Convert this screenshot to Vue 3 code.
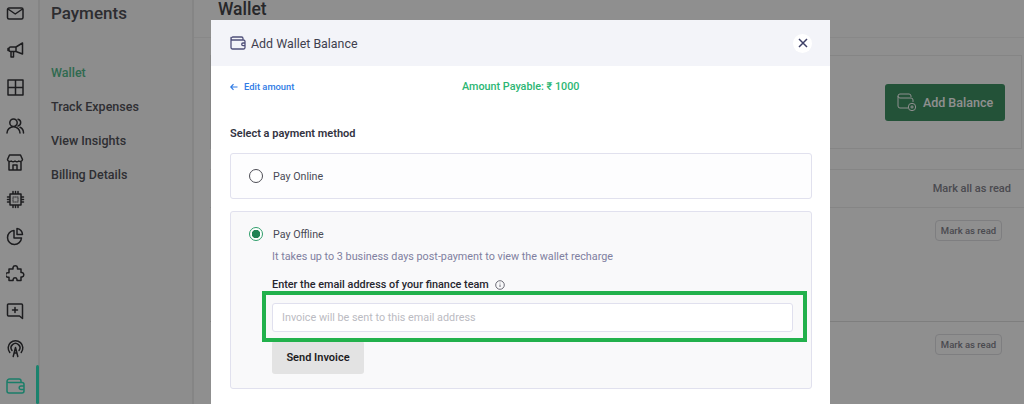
<script setup>
const icons = [
  { d: 'M3 4h12.500a1.500 1.500 0 0 1 1.500 1.500v8a1.500 1.500 0 0 1-1.500 1.500H3a1.500 1.500 0 0 1-1.500-1.500v-8A1.500 1.500 0 0 1 3 4zM2 5l7.250 5L16.500 5' },
  { d: 'M16.500 2v11L10 10.500H4.500A1.500 1.500 0 0 1 3 9V7.500A1.500 1.500 0 0 1 4.500 6H10zM10 6v4.500M5 10.500v5.500h2.500v-5.500M3 7.500H2v2h1' },
  { d: 'M2 2h15v15H2zM9.500 2v15M2 9.500h15' },
  { d: 'M7.500 3a3.700 3.700 0 1 1 0 7.400 3.700 3.700 0 0 1 0-7.400zM1 17c0-3.500 2.800-6.200 6.500-6.200S14 13.500 14 17M12 3.200a3.500 3.500 0 0 1 0 6.800M14 11.200c2 .8 3.500 3 3.500 5.800' },
  { d: 'M3.500 2h11L16.500 6.500a2.300 2.300 0 0 1-3.700 1.500 3 3 0 0 1-3.800 0 3 3 0 0 1-3.800 0A2.300 2.300 0 0 1 1.500 6.500zM3 9v8h12V9M7 17v-5h4v5' },
  { d: 'M4 4h11v11H4zM7 1.500V4M9.500 1.500V4M12 1.500V4M7 15v2.500M9.500 15v2.500M12 15v2.500M1.500 7H4M1.500 9.500H4M1.500 12H4M15 7h2.500M15 9.500h2.500M15 12h2.500' },
  { d: 'M8 3.500a7 7 0 1 0 7.500 7.500H8zM11 1.500a6 6 0 0 1 5.500 6H11z' },
  { d: 'M7 3.500a2.300 2.300 0 0 1 4.500 0V5h3.500v3.500h1a2.300 2.300 0 0 1 0 4.500h-1v3.500h-4v-1.200a2 2 0 0 0-3.900 0v1.200H3v-3.300H1.800a2.200 2.200 0 0 1 0-4.400H3V5h4z' },
  { d: 'M2.500 2h13a1 1 0 0 1 1 1v13.500L13.500 14h-11a1 1 0 0 1-1-1V3a1 1 0 0 1 1-1zM9 5.500v5M6.500 8h5' },
  { d: 'M3.800 13.500a7.300 7.300 0 1 1 11.400 0M6 11.500a4.400 4.400 0 1 1 7 0M7.200 17.500l2.300-9 2.300 9M8 14h3' },
];
</script>

<template>
  <div class="page">
    <nav class="rail">
      <svg v-for="(ic, i) in icons" :key="i" class="rail-icon" viewBox="0 0 19 19" width="19" height="19">
        <path :d="ic.d" />
        <path v-if="i === 5" class="chip-dots" d="M7 7h5v5H7z" />
      </svg>
      <svg class="rail-icon active-icon" viewBox="0 0 19 19" width="19" height="19">
        <path d="M1 5.500A2.500 2.500 0 0 1 3.500 3h9.500a2 2 0 0 1 2 2v1.500M1 5.500V15a2 2 0 0 0 2 2h13a2 2 0 0 0 2-2V8.500a2 2 0 0 0-2-2H3a2 2 0 0 1-2-1zM18 10h-3a1.800 1.800 0 0 0 0 3.600h3" />
      </svg>
      <span class="active-bar"></span>
    </nav>

    <aside class="side">
      <h2>Payments</h2>
      <ul>
        <li class="on">Wallet</li>
        <li>Track Expenses</li>
        <li>View Insights</li>
        <li>Billing Details</li>
      </ul>
    </aside>

    <main class="main">
      <header class="main-head"><h1>Wallet</h1></header>
      <div class="content">
        <section class="balance">
          <button class="add">
            <svg viewBox="0 0 20 20" width="20" height="20" class="add-icon">
              <path d="M1 4a2 2 0 0 1 2-2h9a2 2 0 0 1 2 2v1M1 4v10a2 2 0 0 0 2 2h8M1 4a2 2 0 0 0 2 2h11a2 2 0 0 1 2 2v2" />
              <circle cx="15" cy="15" r="3.700" /><path d="M15 13.300v3.400M13.300 15h3.400" />
            </svg>
            Add Balance
          </button>
        </section>
        <div class="mark-all">Mark all as read</div>
        <div class="note"><span class="mark">Mark as read</span></div>
        <div class="note"><span class="mark">Mark as read</span></div>
      </div>
    </main>

    <div class="scrim"></div>

    <div class="modal">
      <header class="m-head">
        <svg viewBox="0 0 16 16" width="16" height="16" class="m-wallet">
          <path d="M1 4a2 2 0 0 1 2-2h8.500a1.500 1.500 0 0 1 1.500 1.500V5M1 4v8.500A1.500 1.500 0 0 0 2.500 14h11a1.500 1.500 0 0 0 1.500-1.500v-6A1.500 1.500 0 0 0 13.500 5H3A2 2 0 0 1 1 4zM15 8h-2a1.300 1.300 0 0 0 0 2.600h2" />
        </svg>
        <span class="m-title">Add Wallet Balance</span>
        <span class="close">
          <svg viewBox="0 0 10 10" width="10" height="10"><path d="M1 1l8 8M9 1L1 9" /></svg>
        </span>
      </header>
      <div class="m-body">
        <div class="top-row">
          <span class="edit">
            <svg viewBox="0 0 8 8" width="8" height="8"><path d="M7.500 4H.800M3.500 1.200L.800 4l2.700 2.800" /></svg>
            Edit amount
          </span>
          <span class="payable">Amount Payable: ₹ 1000</span>
        </div>
        <div class="select">Select a payment method</div>
        <div class="opt online">
          <span class="radio"></span>
          <span>Pay Online</span>
        </div>
        <div class="opt offline">
          <div class="off-row">
            <span class="radio checked"></span>
            <span>Pay Offline</span>
          </div>
          <div class="off-body">
            <p class="hint">It takes up to 3 business days post-payment to view the wallet recharge</p>
            <label class="lab">Enter the email address of your finance team
              <svg viewBox="0 0 10 10" width="10" height="10" class="info">
                <circle cx="5" cy="5" r="4.300" /><path d="M5 4.500v2.500M5 2.700v.7" />
              </svg>
            </label>
            <input class="email" placeholder="Invoice will be sent to this email address" />
            <button class="send">Send Invoice</button>
          </div>
        </div>
      </div>
    </div>

    <div class="highlight"></div>
  </div>
</template>

<style>
html, body { margin: 0; overflow: hidden; }
</style>

<style scoped>
.page {
  position: relative;
  width: 1024px;
  height: 404px;
  overflow: hidden;
  display: flex;
  background: #fff;
  font-family: Roboto, "Liberation Sans", sans-serif;
  color: #2e2e3a;
}
.rail {
  position: relative;
  width: 40px;
  flex: none;
  box-sizing: border-box;
  padding: 4px 0 0 6px;
  display: flex;
  flex-direction: column;
  align-items: flex-start;
  gap: 18.200px;
  border-right: 2px solid #eeeeee;
}
.rail-icon { flex: none; fill: none; stroke: #343438; stroke-width: 1.500; stroke-linejoin: round; stroke-linecap: round; }
.chip-dots { stroke-width: .8; stroke-dasharray: 1 1; }
.active-icon { stroke: #2fe0bb; }
.active-bar {
  position: absolute;
  right: -1px;
  top: 365px;
  width: 3px;
  height: 39px;
  border-radius: 2px;
  background: #2fe8c2;
}
.side {
  width: 154px;
  flex: none;
  box-sizing: border-box;
  padding-left: 11px;
  background: #fbfbfb;
  border-right: 2px solid #eeeeee;
}
.side h2 { margin: 0; padding-top: 3px; font-size: 17px; line-height: 21px; font-weight: 500; color: #505057; }
.side ul { list-style: none; margin: 39px 0 0; padding: 0; }
.side li { height: 34px; line-height: 20px; font-size: 12.500px; font-weight: 500; color: #54545c; }
.side li.on { color: #55bd8e; }
.main { flex: 1; min-width: 0; }
.main-head { height: 38px; box-sizing: border-box; border-bottom: 1px solid #f2f2f2; padding-left: 24px; }
.main-head h1 { margin: 0; font-size: 17.500px; line-height: 18px; font-weight: 500; color: #46464c; }
.content { padding-left: 16px; }
.balance {
  margin: 17px 2px 0 0;
  height: 94px;
  box-sizing: border-box;
  border: 1px solid #eeeeee;
  display: flex;
  justify-content: flex-end;
  align-items: center;
  padding-right: 16px;
}
.add {
  width: 120px;
  height: 37px;
  display: flex;
  align-items: center;
  justify-content: center;
  gap: 6px;
  border: 0;
  border-radius: 3px;
  background: #3f9264;
  color: #fff;
  font: 500 12.500px Roboto, sans-serif;
}
.add-icon { fill: none; stroke: #fff; stroke-width: 1; }
.mark-all {
  margin-top: 20px;
  height: 39px;
  box-sizing: border-box;
  border-top: 1px solid #eeeeee;
  border-bottom: 1px solid #eeeeee;
  text-align: right;
  padding-right: 13px;
  font-size: 11px;
  font-weight: 500;
  line-height: 37px;
  color: #85858e;
}
.note {
  height: 114px;
  box-sizing: border-box;
  border-bottom: 1px solid #e0e0e0;
  padding: 12px 22px 0 0;
  display: flex;
  justify-content: flex-end;
  align-items: flex-start;
}
.mark {
  width: 67px;
  height: 21px;
  box-sizing: border-box;
  border: 1px solid #e0e0e4;
  border-radius: 4px;
  text-align: center;
  font-size: 9.500px;
  font-weight: 500;
  line-height: 19px;
  color: #85858e;
}
.scrim { position: absolute; inset: 0; background: rgba(0, 0, 0, 0.44); }
.modal {
  position: absolute;
  left: 211px;
  top: 20px;
  width: 619px;
  height: 400px;
  background: #fff;
}
.m-head {
  height: 46px;
  background: #f3f4f9;
  display: flex;
  align-items: center;
  padding: 0 18px 0 19px;
}
.m-wallet { fill: none; stroke: #50507a; stroke-width: 1.300; }
.m-title { margin-left: 5px; font-size: 12.400px; color: #3f3f4e; }
.close {
  margin-left: auto;
  width: 19px;
  height: 19px;
  border-radius: 50%;
  background: #fff;
  display: flex;
  align-items: center;
  justify-content: center;
}
.close svg { fill: none; stroke: #3d3f66; stroke-width: 1.500; }
.m-body { padding: 0 18px 0 19px; }
.top-row { height: 41px; display: flex; align-items: center; }
.edit { font-size: 9.400px; font-weight: 500; color: #2f7be5; display: flex; align-items: center; gap: 6px; }
.edit svg { fill: none; stroke: #2f7be5; stroke-width: 1.200; }
.payable { margin-left: 167.500px; font-size: 10.800px; font-weight: 500; color: #2bb673; }
.select { margin-top: 20px; font-size: 11px; line-height: 13px; font-weight: 600; color: #33333f; }
.opt {
  box-sizing: border-box;
  border: 1px solid #e1e1ee;
  border-radius: 3px;
  font-size: 10.700px;
  color: #4a4a55;
}
.online {
  margin-top: 13px;
  height: 46px;
  display: flex;
  align-items: center;
  gap: 10px;
  padding-left: 18px;
  background: #fdfdfe;
}
.offline { margin-top: 12px; height: 178px; background: #f9f9fa; padding: 14px 18px 0; }
.off-row { display: flex; align-items: center; gap: 10px; height: 16px; }
.radio {
  box-sizing: border-box;
  width: 14px;
  height: 14px;
  flex: none;
  border: 1px solid #4d4d55;
  border-radius: 50%;
  background: #fff;
}
.checked {
  border-color: #2f9e6a;
  background: radial-gradient(circle, #1f8253 0 4px, #fff 4.500px);
}
.off-body { padding-left: 23px; }
.hint { margin: 8px 0 0; font-size: 10.800px; line-height: 14px; color: #8080a0; }
.lab { display: flex; align-items: center; gap: 6px; margin-top: 14px; font-size: 10.850px; line-height: 14px; font-weight: 500; color: #26262e; }
.info { fill: none; stroke: #4a4a55; stroke-width: .8; }
.email {
  display: block;
  margin-top: 11px;
  width: 521px;
  height: 29px;
  box-sizing: border-box;
  border: 1px solid #e0e0ee;
  border-radius: 3px;
  padding: 0 9px;
  background: #fff;
  font: 10.800px Roboto, sans-serif;
  outline: none;
}
.email::placeholder { color: #bbbbc2; opacity: 1; }
.send {
  display: block;
  margin-top: 9px;
  width: 92px;
  height: 33px;
  border: 0;
  border-radius: 3px;
  background: #e3e3e3;
  color: #1c1c22;
  font: 600 11px Roboto, sans-serif;
}
.highlight {
  position: absolute;
  left: 262px;
  top: 291px;
  width: 545px;
  height: 51px;
  box-sizing: border-box;
  border: 4px solid #22b14c;
}
</style>
